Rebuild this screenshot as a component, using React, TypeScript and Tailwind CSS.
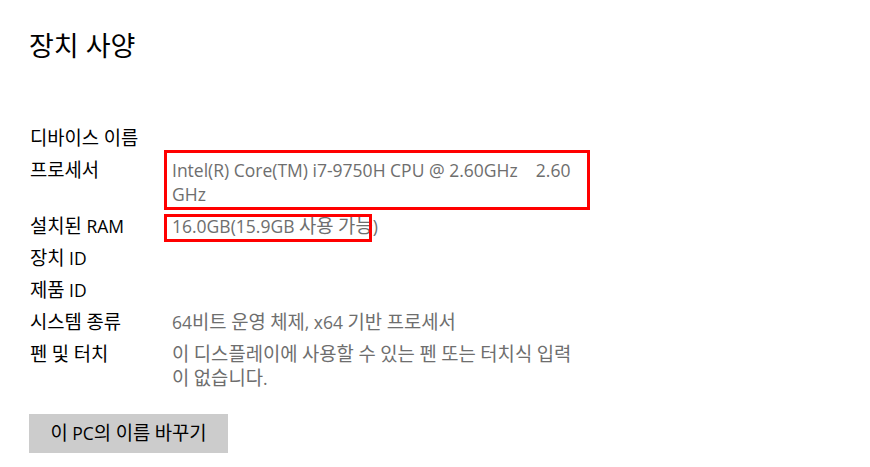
function T({ text }: { text: string }) {
  const parts = text.split(/([\uAC00-\uD7A3]+)/);
  return (
    <>
      {parts.map((p, i) =>
        /[\uAC00-\uD7A3]/.test(p) ? (
          <span key={i} className="text-[18.8px] leading-[24px]">
            {p}
          </span>
        ) : (
          <span key={i}>{p}</span>
        )
      )}
    </>
  );
}

export default function App() {
  const font = { fontFamily: '"Open Sans", "Noto Sans CJK KR", sans-serif' };
  const rows: { label: string; value?: string }[] = [
    { label: "장치 ID" },
    { label: "제품 ID" },
    { label: "시스템 종류", value: "64비트 운영 체제, x64 기반 프로세서" },
    { label: "펜 및 터치", value: "이 디스플레이에 사용할 수 있는 펜 또는 터치식 입력이 없습니다." },
  ];
  return (
    <div className="w-[870px] h-[467px] bg-white overflow-hidden" style={font}>
      <div className="pl-[29px] pt-[28px]">
        <h1 className="text-[27px] leading-[36px] text-black font-normal">장치 사양</h1>
        <div className="mt-[62px] flex flex-col gap-[8px] text-[17.5px] leading-[24px]">
          <div className="flex">
            <div className="w-[142px] pl-[1px] text-black">
              <T text="디바이스 이름" />
            </div>
          </div>
          <div className="flex">
            <div className="w-[142px] pl-[1px] text-black">
              <T text="프로세서" />
            </div>
            <div className="relative w-[414px] pl-[1px] text-[#6e6e6e]">
              Intel(R) Core(TM) i7-9750H CPU @ 2.60GHz&nbsp;&nbsp;&nbsp; 2.60 GHz
              <div className="absolute left-[-7px] top-[-8px] w-[426px] h-[60px] border-[3px] border-[#ff0000]" />
            </div>
          </div>
          <div className="flex">
            <div className="w-[142px] pl-[1px] text-black">
              <T text="설치된 RAM" />
            </div>
            <div className="relative pl-[1px] text-[#6e6e6e]">
              <T text="16.0GB(15.9GB 사용 가능)" />
              <div className="absolute left-[-7px] top-[0px] w-[208px] h-[28px] border-[3px] border-[#ff0000]" />
            </div>
          </div>
          {rows.map((r) => (
            <div className="flex" key={r.label}>
              <div className="w-[142px] pl-[1px] text-black">
                <T text={r.label} />
              </div>
              {r.value && (
                <div className="w-[414px] pl-[1px] text-[#6e6e6e]">
                  <T text={r.value} />
                </div>
              )}
            </div>
          ))}
        </div>
        <button className="mt-[24px] w-[199px] h-[39px] bg-[#cccccc] text-black text-[17.5px]">
          <T text="이 PC의 이름 바꾸기" />
        </button>
      </div>
    </div>
  );
}
